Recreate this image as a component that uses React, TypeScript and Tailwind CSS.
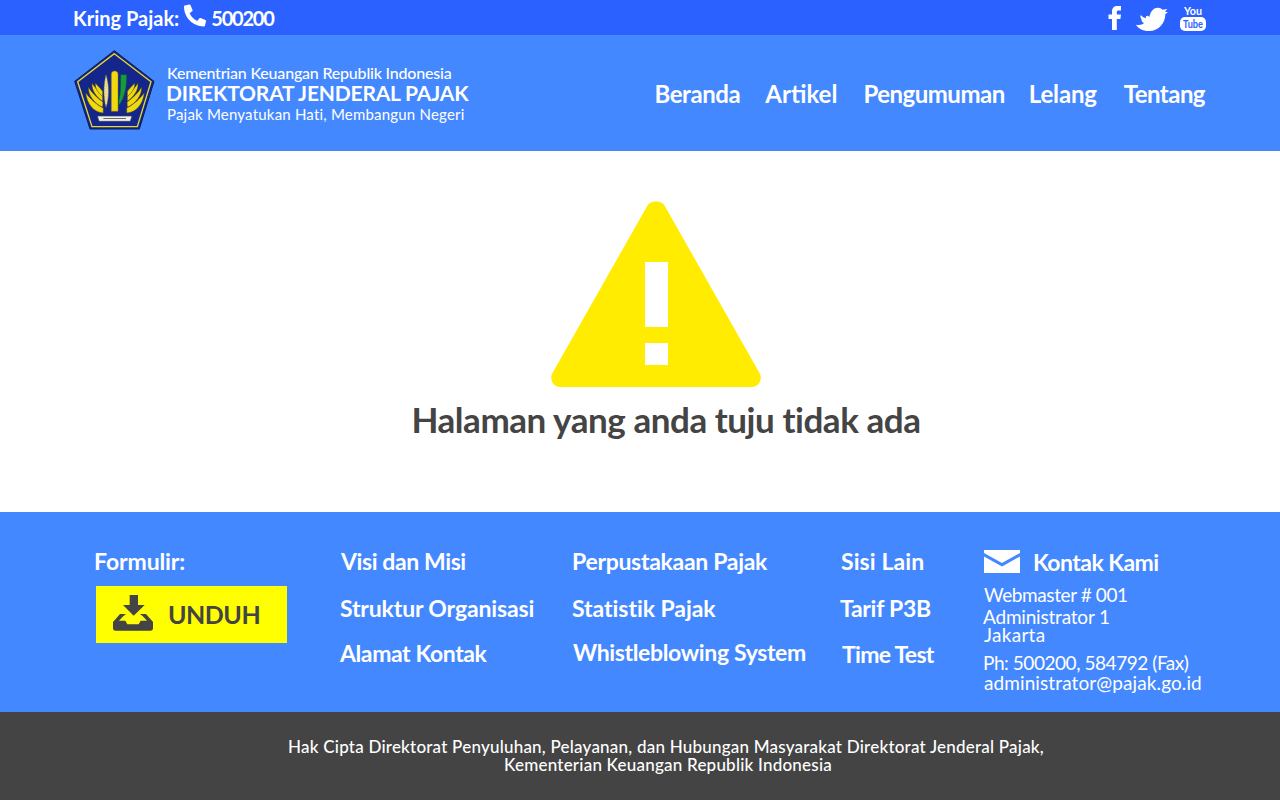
import React from 'react';
import { FaPhoneAlt } from 'react-icons/fa';

const navItems = [
    { label: 'Beranda', className: 'tracking-[-0.4px]' },
    { label: 'Artikel', className: 'ml-[25px] tracking-[0px]' },
    { label: 'Pengumuman', className: 'ml-[26px] tracking-[-0.5px]' },
    { label: 'Lelang', className: 'ml-[24px] tracking-[-0.15px]' },
    { label: 'Tentang', className: 'ml-[27px] tracking-[-0.55px]' },
];

const Wing = () => (
    <g fill="#f2d80f" stroke="#3a3a10" strokeWidth="1.500">
        <path d="M100 195 C72 194 50 168 47 134 C60 152 80 170 100 180Z" />
        <path d="M98 178 C72 166 54 142 55 117 C66 136 82 150 99 162Z" />
        <path d="M98 160 C78 146 64 126 66 106 C76 120 88 132 98 144Z" />
        <path d="M98 146 C84 134 74 120 76 105 C84 114 92 122 98 130Z" />
    </g>
);

const Logo = () => (
    <svg width="82" height="80" viewBox="12 6 246 240" className="-mt-[6px] shrink-0">
        <polygon points="133,8 252,100 208,243 60,243 14,100" fill="#14268c" stroke="#0d1c4c" strokeWidth="3" />
        <polygon points="133,17 243,101 202,236 66,236 23,101" fill="#14268c" stroke="#e8d82c" strokeWidth="4" />
        <Wing />
        <g transform="matrix(-1 0 0 1 270 0)">
            <Wing />
        </g>
        <path d="M108 80 C100 110 100 150 108 178 C118 150 118 110 108 80Z" fill="#e6dc96" stroke="#6e6a30" strokeWidth="2" strokeDasharray="5 3" />
        <path d="M124 78 C124 66 144 66 144 78 V190 H124Z" fill="#f2d80f" stroke="#8b7a10" strokeWidth="1.500" />
        <path d="M152 80 H170 C170 115 165 150 146 172 V160 C152 140 152 110 152 80Z" fill="#169c3e" stroke="#0c5a28" strokeWidth="1.500" />
        <path d="M82 204 H186 L181 220 H87Z" fill="#f0f0f0" stroke="#3c3c3c" strokeWidth="2" />
        <rect x="100" y="210" width="68" height="3" fill="#6a6a6a" />
    </svg>
);

const FooterLink = ({ children, className = '' }: { children: React.ReactNode; className?: string }) => (
    <a className={`block text-[23px] leading-[30px] font-bold text-white ${className}`}>{children}</a>
);

export default function App() {
    return (
        <div className="flex h-[800px] flex-col overflow-hidden bg-white font-[Lato,sans-serif] text-white">
            <div className="flex h-[35px] items-center justify-between bg-[#2b62ff] pl-[73px] pr-[70px]">
                <div className="flex items-center text-[20px] font-bold">
                    <span>Kring Pajak:</span>
                    <FaPhoneAlt className="ml-[5px] mr-[5px] h-[23px] w-[22px] -translate-y-[2px]" />
                    <span className="tracking-[-1.200px]">500200</span>
                </div>
                <div className="flex items-center">
                    <svg width="14" height="24" viewBox="0 0 14 24" fill="white">
                        <path d="M4 24 V13 H0.500 V8.500 H4 V5.500 C4 2 6 0 9.500 0 H13 V4.500 H10.500 C9.200 4.500 8.800 5 8.800 6.200 V8.500 H13 L12.400 13 H8.800 V24Z" />
                    </svg>
                    <svg width="40" height="30" viewBox="0 0 120 90" fill="white" className="ml-[10px]">
                        <path d="M12 65 C24 68 32 64 36 60 C30 58 27 52 29 49 C27 47 24 42 26 36 C32 42 36 44 42 46 C40 40 43 38 48 38 L52 42 C55 28 62 14 78 14 C84 14 88 16 92 20 L106 18 L99 26 L108 28 L100 33 C100 60 80 85 50 84 C32 84 18 76 12 65Z" />
                    </svg>
                    <svg width="34" height="34" viewBox="0 0 34 34" className="ml-[4px]">
                        <text x="17" y="14" textAnchor="middle" fontSize="12" fontWeight="700" fill="white" fontFamily="Lato, sans-serif" textLength="18" lengthAdjust="spacingAndGlyphs">You</text>
                        <rect x="4" y="16" width="26" height="14" rx="5" fill="white" />
                        <text x="17" y="27" textAnchor="middle" fontSize="12" fontWeight="700" fill="#2b62ff" fontFamily="Lato, sans-serif" textLength="20" lengthAdjust="spacingAndGlyphs">Tube</text>
                    </svg>
                </div>
            </div>

            <header className="flex h-[116px] items-center justify-between bg-[#4488ff] pl-[74px] pr-[75px]">
                <div className="flex items-center">
                    <Logo />
                    <div className="ml-[11px] mt-[2px]">
                        <div className="text-[16px] leading-[18px] font-medium tracking-[-0.2px]">Kementrian Keuangan Republik Indonesia</div>
                        <div className="-ml-[1px] text-[21px] leading-[21px] font-bold tracking-[-0.2px]">DIREKTORAT JENDERAL PAJAK</div>
                        <div className="text-[15px] leading-[22px] tracking-[0.2px]">Pajak Menyatukan Hati, Membangun Negeri</div>
                    </div>
                </div>
                <nav className="mt-[1px] flex items-center text-[24px] font-bold">
                    {navItems.map((item) => (
                        <a key={item.label} className={item.className}>{item.label}</a>
                    ))}
                </nav>
            </header>

            <main className="flex h-[361px] flex-col items-center bg-white pt-[50px] pl-[32px]">
                <svg width="212" height="187" viewBox="0 0 212 187">
                    <path
                        fillRule="evenodd"
                        fill="#ffec00"
                        d="M97.500 4.500 C99.500 1.500 102 0.500 105 0.500 H107 C110 0.500 112.500 1.500 114.500 4.500 L209.500 172 C213 178 209 186 202 186 H10 C3 186 -1 178 2.500 172 Z M95 61 V126 H118 V61 Z M95 142 V164 H118 V142 Z"
                    />
                </svg>
                <h1 className="ml-[20px] mt-[9px] text-[35px] leading-[44px] font-bold tracking-[-0.45px] text-[#444444]">Halaman yang anda tuju tidak ada</h1>
            </main>

            <footer className="flex h-[200px] bg-[#4488ff] pl-[95px] pt-[34px]">
                <div className="w-[246px]">
                    <div className="-ml-[1px] -mt-[1px] text-[23px] leading-[32px] font-bold tracking-[-0.1px]">Formulir:</div>
                    <a className="ml-[1px] mt-[9px] flex h-[57px] w-[191px] items-center bg-[#ffff00] pl-[12px] text-[#444444]">
                        <svg width="50" height="44" viewBox="0 0 150 132" fill="#444444" className="-mt-[5px] shrink-0">
                            <path d="M65 15 H90 V45 H110 L77 77 L45 45 H65Z" />
                            <path d="M36 72 L54 72 L44 80 L33 92 L52 92 L58 103 L92 103 L98 92 L117 92 L106 80 L96 72 L114 72 L135 96 V114 Q135 122 127 122 H23 Q15 122 15 114 V96 Z" />
                        </svg>
                        <span className="ml-[10px] text-[25px] font-bold tracking-[-0.5px]">UNDUH</span>
                    </a>
                </div>
                <div className="w-[231px]">
                    <FooterLink className="tracking-[-0.4px]">Visi dan Misi</FooterLink>
                    <FooterLink className="-ml-[1px] mt-[17px] tracking-[-0.15px]">Struktur Organisasi</FooterLink>
                    <FooterLink className="-ml-[1px] mt-[15px] tracking-[-0.4px]">Alamat Kontak</FooterLink>
                </div>
                <div className="w-[269px]">
                    <FooterLink className="tracking-[-0.3px]">Perpustakaan Pajak</FooterLink>
                    <FooterLink className="mt-[17px] tracking-[-0.05px]">Statistik Pajak</FooterLink>
                    <FooterLink className="ml-[1px] mt-[14px] tracking-[-0.35px]">Whistleblowing System</FooterLink>
                </div>
                <div className="w-[143px]">
                    <FooterLink className="tracking-[0.1px]">Sisi Lain</FooterLink>
                    <FooterLink className="-ml-[1px] mt-[17px] tracking-[-0.3px]">Tarif P3B</FooterLink>
                    <FooterLink className="ml-[1px] mt-[16px] tracking-[-0.7px]">Time Test</FooterLink>
                </div>
                <div className="w-[230px]">
                    <div className="flex items-center pt-[1px]">
                        <svg width="36" height="23" viewBox="0 0 36 23" fill="white" className="-mt-[1px] shrink-0">
                            <path d="M0 0 H36 V3 L18 13 L0 3Z" />
                            <path d="M0 6.500 L18 16.500 L36 6.500 V23 H0Z" />
                        </svg>
                        <span className="ml-[13px] text-[23px] leading-[30px] font-bold tracking-[-0.55px]">Kontak Kami</span>
                    </div>
                    <div className="mt-[8px] text-[19px] leading-[20px]">
                        <div className="tracking-[-0.4px]">Webmaster # 001</div>
                        <div className="-ml-[1px] mt-[2px] tracking-[-0.2px]">Administrator 1</div>
                        <div className="-mt-[2px] tracking-[0.3px]">Jakarta</div>
                        <div className="-ml-[1px] mt-[8px] tracking-[-0.45px]">Ph: 500200, 584792 (Fax)</div>
                        <div className="tracking-[0.1px]">administrator@pajak.go.id</div>
                    </div>
                </div>
            </footer>

            <div className="flex h-[88px] flex-col items-center bg-[#444444] pl-[52px] pt-[26px] text-[17px] leading-[18px] font-medium tracking-[0.22px]">
                <div>Hak Cipta Direktorat Penyuluhan, Pelayanan, dan Hubungan Masyarakat Direktorat Jenderal Pajak,</div>
                <div className="ml-[4px]">Kementerian Keuangan Republik Indonesia</div>
            </div>
        </div>
    );
}
